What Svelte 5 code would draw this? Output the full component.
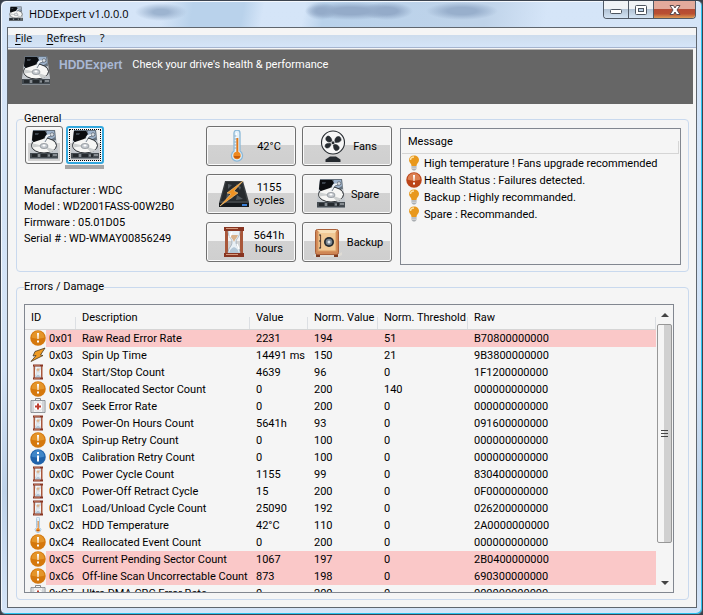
<script lang="ts">
    const drives = ['Drive 1', 'Drive 2'];
    let selected = $state(1);

    const info = [
        'Manufacturer : WDC',
        'Model : WD2001FASS-00W2B0',
        'Firmware : 05.01D05',
        'Serial # : WD-WMAY00856249'
    ];

    const tools = [
        { icon: 'temp', text: '42°C' },
        { icon: 'fan', text: 'Fans' },
        { icon: 'power', text: '1155\ncycles' },
        { icon: 'hdd', text: 'Spare' },
        { icon: 'hours', text: '5641h\nhours' },
        { icon: 'safe', text: 'Backup' }
    ];

    const messages = [
        { icon: 'bulb', text: 'High temperature ! Fans upgrade recommended' },
        { icon: 'fail', text: 'Health Status : Failures detected.' },
        { icon: 'bulb', text: 'Backup : Highly recommanded.' },
        { icon: 'bulb', text: 'Spare : Recommanded.' }
    ];

    const columns = ['ID', 'Description', 'Value', 'Norm. Value', 'Norm. Threshold', 'Raw'];

    // icon, id, description, value, norm. value, norm. threshold, raw, damaged
    const rows: any[] = [
        ['warn', '0x01', 'Raw Read Error Rate', '2231', '194', '51', 'B70800000000', true],
        ['bolt', '0x03', 'Spin Up Time', '14491 ms', '150', '21', '9B3800000000'],
        ['hours', '0x04', 'Start/Stop Count', '4639', '96', '0', '1F1200000000'],
        ['warn', '0x05', 'Reallocated Sector Count', '0', '200', '140', '000000000000'],
        ['aid', '0x07', 'Seek Error Rate', '0', '200', '0', '000000000000'],
        ['hours', '0x09', 'Power-On Hours Count', '5641h', '93', '0', '091600000000'],
        ['warn', '0x0A', 'Spin-up Retry Count', '0', '100', '0', '000000000000'],
        ['info', '0x0B', 'Calibration Retry Count', '0', '100', '0', '000000000000'],
        ['hours', '0x0C', 'Power Cycle Count', '1155', '99', '0', '830400000000'],
        ['hours', '0xC0', 'Power-Off Retract Cycle', '15', '200', '0', '0F0000000000'],
        ['hours', '0xC1', 'Load/Unload Cycle Count', '25090', '192', '0', '026200000000'],
        ['temp', '0xC2', 'HDD Temperature', '42°C', '110', '0', '2A0000000000'],
        ['warn', '0xC4', 'Reallocated Event Count', '0', '200', '0', '000000000000'],
        ['warn', '0xC5', 'Current Pending Sector Count', '1067', '197', '0', '2B0400000000', true],
        ['warn', '0xC6', 'Off-line Scan Uncorrectable Count', '873', '198', '0', '690300000000', true],
        ['aid', '0xC7', 'Ultra DMA CRC Error Rate', '0', '200', '0', '000000000000']
    ];

    let listElem: HTMLElement;

    function scroll(dy: number) {
        listElem.scrollTop += dy;
    }
</script>

{#snippet icon(name: string)}
    <svg viewBox="0 0 32 32" aria-hidden="true">
        {#if name === 'hdd'}
            <path d="M5 1h22l3 22v7H2v-7z" fill="#c3c8cd" />
            <path d="M5 1h22l1 10-6 2H8l-4-1z" fill="#66727e" />
            <path d="M19 2h7l1 6-5 3-5-3z" fill="#9db2cb" />
            <ellipse cx="16" cy="16.500" rx="12.500" ry="7.500" fill="#f6f6f4" stroke="#25292d" />
            <path d="M5 2h12l2 3-4 5-9 3-2-2z" fill="#0b0d10" />
            <path d="M7 4h4l-1 2H7z" fill="#3a424b" />
            <path d="M16 17L5 14.500a13 7 0 0 0-1 4zM16 17l11 4a13 9 0 0 1-5 2.500z" fill="#cdd0d0" />
            <ellipse cx="16" cy="17" rx="4" ry="2.600" fill="#c3c8cd" stroke="#84898f" stroke-width=".7" />
            <ellipse cx="16" cy="16.600" rx="1.600" ry="1" fill="#fff" />
            <path d="M25 5l-6 2-3 6" fill="none" stroke="#eef2f5" stroke-width="2" />
            <path d="M26 6l-6 2-3 5" fill="none" stroke="#5f6b77" stroke-width=".8" />
            <circle cx="24" cy="5.500" r="1.800" fill="#d7dee5" stroke="#4b535c" stroke-width=".6" />
            <path d="M2 24h28v5.500H2z" fill="#454c52" />
            <path d="M4 25h5v3H4zM13 25h6v3h-6zM22 25h2v3h-2z" fill="#252a2e" />
            <path d="M10 25h2v3h-2zM20 25.500h2v2h-2zM25 25h4v2h-4z" fill="#858b90" />
        {:else if name === 'temp'}
            <path d="M13 3a3 3 0 0 1 6 0v18a5.500 5.500 0 1 1-6 0z" fill="#e4f1fa" stroke="#8bb8d8" stroke-width="1.300" />
            <path d="M15 3h1v19h-1z" fill="#fff" />
            <path d="M15.300 8h2v15h-2z" fill="#e17819" />
            <circle cx="16" cy="25.500" r="3.700" fill="#ee8a22" />
            <path d="M12.500 26a3.700 3.700 0 0 0 7 0z" fill="#c85c0a" />
            <path d="M13.500 6h2M13.500 9h2M13.500 12h2M13.500 15h2M13.500 18h2" stroke="#7a98ac" stroke-width=".8" />
        {:else if name === 'fan'}
            <path d="M13 26.500h6l4.500 3V32h-15v-2.500z" fill="#262b30" />
            <circle cx="16" cy="12.500" r="11.500" fill="#f7f7f7" stroke="#262b30" stroke-width="1.100" />
            <path d="M14.500 11c-5-1-4-6-1-6.500 3 0 3 4 2.500 6zM18.500 12c2-4.500 7-3 6.500 0 0 3.500-4 3-6.500 1.500zM17 15c4 2 3.500 6.500 0 6.500-3 0-3-3-1.500-6.500zM13.500 13.500c-2.500 3.500-7 1.500-6-1 1-2.500 4-1.500 6 0z" fill="#262b30" stroke="#262b30" stroke-width=".6" transform="rotate(-25 16 13)" />
            <circle cx="16" cy="12.700" r="1.500" fill="#262b30" />
        {:else if name === 'power'}
            <path d="M7 3h18l6 21v5H1v-4z" fill="#3d4144" />
            <path d="M8 4h16l5 19H3z" fill="#272b2e" />
            <path d="M10 6l4 1-4 4zM18 6l5 3-1 3zM9 15l6 5-7 2zM19 17l6 4-7 1z" fill="#52595e" />
            <path d="M1 25h30v4H1z" fill="#16191c" />
            <path d="M24 26h5v2h-5z" fill="#3b80d8" />
            <path d="M25 3L9 15l4 1L2 28 20 15l-4-2z" fill="#ef9324" stroke="#ffd08a" stroke-width=".6" />
        {:else if name === 'hours'}
            <path d="M7 3h3v26H7zM22 3h3v26h-3z" fill="#a9573a" />
            <path d="M10 4h12c0 8-4 8-4 12 0 5 4 5 4 12H10c0-7 4-7 4-12 0-4-4-4-4-12z" fill="#e9f0f5" stroke="#93a5b4" stroke-width=".7" />
            <path d="M12 9h8c-1 3-3 4-4 7-1-3-3-4-4-7z" fill="#d9b18a" />
            <path d="M11 27c1-4 3-5 5-6 2 1 4 2 5 6z" fill="#b3c6d6" />
            <path d="M14 6l-2 5M19 18l2 5" stroke="#fff" stroke-width="1.500" />
            <path d="M6 1h20v4H6zM6 27h20v4H6z" fill="#883522" />
            <path d="M8 2h12v1H8zM8 28h12v1H8z" fill="#d59a7d" />
        {:else if name === 'safe'}
            <path d="M2 29h24l5-3v3l-4 2H3z" fill="#dedbd5" />
            <path d="M5 27h4v4H5zM23 27h4v4h-4z" fill="#7a3b22" />
            <rect x="4.500" y="3.500" width="23" height="25" rx="2" fill="#cf8654" stroke="#a9603a" />
            <rect x="7" y="6" width="18" height="19" fill="#f1c995" stroke="#dc9c63" />
            <path d="M6 4h20l-2 3H9z" fill="#f8dfb7" />
            <path d="M9.500 9v13" stroke="#6f4a35" stroke-width="1.200" />
            <path d="M8 9h2M8 15h2M8 22h2" stroke="#333" />
            <circle cx="18" cy="16" r="5" fill="#23292f" />
            <circle cx="18" cy="16" r="3.300" fill="#77848f" />
            <circle cx="18" cy="16" r="1.500" fill="#dde4e9" />
        {:else if name === 'bulb'}
            <path d="M16 1c6 0 10 4 10 9 0 5-5 7-5 12H11c0-5-5-7-5-12 0-5 4-9 10-9z" fill="#e8981d" />
            <path d="M9 10c0-4 3-6 7-6" fill="none" stroke="#fce0a0" stroke-width="3" />
            <path d="M11 22h10v6l-3 3h-4l-3-3z" fill="#a9adb1" />
            <path d="M11 24h10M11 27h10" stroke="#e1e3e5" stroke-width="1.300" />
        {:else if name === 'warn' || name === 'fail'}
            <circle cx="16" cy="16" r="15.500" fill={name === 'fail' ? '#bb4419' : '#d5780d'} />
            <path d="M3 15a13 13 0 0 1 26 0c-7 3-19 3-26 0z" fill={name === 'fail' ? '#dc8052' : '#e4952a'} />
            <path d="M14 6h4l-1 12h-2zM14 21h4v4h-4z" fill="#fff" />
        {:else if name === 'info'}
            <circle cx="16" cy="16" r="15.500" fill="#1f62aa" />
            <path d="M3 15a13 13 0 0 1 26 0c-7 3-19 3-26 0z" fill="#3f86c8" />
            <path d="M14 6h4v4h-4zM14 13h4v12h-4z" fill="#fff" />
        {:else if name === 'bolt'}
            <path d="M30 2L10 9 6 18l6-1L2 29l24-12-5-1z" fill="#ef9b24" stroke="#40321c" stroke-width="1.500" />
        {:else if name === 'aid'}
            <path d="M11 5V1h10v4" fill="none" stroke="#888" stroke-width="2" />
            <path d="M2 5h28v24H2z" fill="#f1f2f3" stroke="#8c9196" stroke-width="2" />
            <path d="M6 5v24M26 5v24" stroke="#b2b7bc" stroke-width="2" />
            <circle cx="16" cy="17" r="9" fill="#fff" stroke="#bfc3c7" />
            <path d="M14 11h4v4h4v4h-4v4h-4v-4h-4v-4h4z" fill="#bf3e2f" />
        {/if}
    </svg>
{/snippet}

<div class="window">
    <header class="titlebar">
        <span class="icon16">{@render icon('hdd')}</span>
        <h1>HDDExpert v1.0.0.0</h1>
        <div class="controls">
            <button aria-label="Minimize">
                <svg viewBox="0 0 14 12"><rect x="1.500" y="5.500" width="11" height="4" rx="1" fill="#fff" stroke="#4d5560" /></svg>
            </button>
            <button aria-label="Maximize">
                <svg viewBox="0 0 14 12">
                    <rect x="1.500" y="1.500" width="11" height="9" rx="1" fill="#fff" stroke="#4d5560" />
                    <rect x="4.500" y="4.500" width="5" height="3" fill="#b9cfe6" stroke="#4d5560" />
                </svg>
            </button>
            <button class="close" aria-label="Close">
                <svg viewBox="0 0 14 12">
                    <path d="M2 1.500h3.500L7 4l1.500-2.500H12L9 6l3 4.500H8.500L7 8l-1.500 2.500H2L5 6z" fill="#fff" stroke="#5a4a4c" />
                </svg>
            </button>
        </div>
    </header>

    <div class="client">
        <nav class="menu">
            <button><u>F</u>ile</button>
            <button><u>R</u>efresh</button>
            <button>?</button>
        </nav>

        <div class="banner">
            <span class="icon32">{@render icon('hdd')}</span>
            <strong>HDDExpert</strong>
            <span>Check your drive's health &amp; performance</span>
        </div>

        <main>
            <fieldset>
                <legend>General</legend>
                <div class="general">
                    <div>
                        <div class="drives">
                            {#each drives as name, i}
                                <button
                                    class="drive"
                                    class:selected={selected === i}
                                    aria-label={name}
                                    onclick={() => selected = i}
                                >
                                    <span class="icon32">{@render icon('hdd')}</span>
                                </button>
                            {/each}
                        </div>
                        <div class="info">
                            {#each info as line}
                                <p>{line}</p>
                            {/each}
                        </div>
                    </div>

                    <div class="tools">
                        {#each tools as tool}
                            <button class="tool">
                                <span class="icon32">{@render icon(tool.icon)}</span>
                                <span>{tool.text}</span>
                            </button>
                        {/each}
                    </div>

                    <div class="messages">
                        <h2>Message</h2>
                        <ul>
                            {#each messages as message}
                                <li><span class="icon16">{@render icon(message.icon)}</span>{message.text}</li>
                            {/each}
                        </ul>
                    </div>
                </div>
            </fieldset>

            <fieldset class="errors">
                <legend>Errors / Damage</legend>
                <div class="list">
                    <div class="scroll" bind:this={listElem}>
                        <table>
                            <colgroup>
                                <col class="c-id" />
                                <col class="c-desc" />
                                <col class="c-value" />
                                <col class="c-norm" />
                                <col class="c-threshold" />
                                <col />
                            </colgroup>
                            <thead>
                                <tr>
                                    {#each columns as column}
                                        <th>{column}</th>
                                    {/each}
                                </tr>
                            </thead>
                            <tbody>
                                {#each rows as [ico, id, desc, value, norm, threshold, raw, damaged]}
                                    <tr class:damaged>
                                        <td class="id">
                                            <div><span class="icon16">{@render icon(ico)}</span>{id}</div>
                                        </td>
                                        <td>{desc}</td>
                                        <td>{value}</td>
                                        <td>{norm}</td>
                                        <td>{threshold}</td>
                                        <td>{raw}</td>
                                    </tr>
                                {/each}
                            </tbody>
                        </table>
                    </div>
                    <div class="scrollbar">
                        <button aria-label="Scroll up" onclick={() => scroll(-17)}>
                            <svg viewBox="0 0 8 4"><path d="M0 4l4-4 4 4z" fill="#444" /></svg>
                        </button>
                        <div class="track">
                            <div class="thumb"><i></i><i></i><i></i></div>
                        </div>
                        <button aria-label="Scroll down" onclick={() => scroll(17)}>
                            <svg viewBox="0 0 8 4"><path d="M0 0h8L4 4z" fill="#444" /></svg>
                        </button>
                    </div>
                </div>
            </fieldset>
        </main>
    </div>
</div>

<style>
:global(body) {
    margin: 0;
    background: #3a404a;
}
.window {
    box-sizing: border-box;
    display: flex;
    flex-direction: column;
    height: 100vh;
    padding: 0 5px 6px 6px;
    border: 1px solid #3c4450;
    border-radius: 6px;
    background:
        radial-gradient(ellipse 26px 9px at 160px 11px, #9db4d0 30%, transparent),
        radial-gradient(ellipse 16px 9px at 320px 10px, #94abc9 30%, transparent),
        radial-gradient(ellipse 46px 9px at 350px 10px, #94abc9 40%, transparent),
        radial-gradient(ellipse 26px 9px at 386px 10px, #94abc9 40%, transparent),
        radial-gradient(ellipse 36px 9px at 461px 10px, #98afcc 40%, transparent),
        linear-gradient(100deg, transparent 160px, #b9d2eb 190px, #b9d2eb 240px, transparent 260px, transparent 300px, #b9d2eb 320px, #bfd3e9 480px, transparent 540px) top / 100% 26px no-repeat,
        linear-gradient(#d5e5f8, #d3e3f6 60%, #bfd3ea 80%, #d5e5f8);
    box-shadow: inset 1px 1px #f4f8fd, inset -1px -1px #2bc4f0;
    color: #000;
    font: 11px/13px Roboto, "Liberation Sans", Arial, sans-serif;
}
button {
    margin: 0;
    padding: 0;
    border: 0;
    background: none;
    color: inherit;
    font: inherit;
}
svg {
    display: block;
    width: 100%;
    height: 100%;
}
.icon16 {
    flex: none;
    width: 16px;
    height: 16px;
}
.icon32 {
    flex: none;
    width: 32px;
    height: 32px;
}

.titlebar {
    display: flex;
    flex: none;
    align-items: center;
    height: 26px;
    padding-left: 1px;
}
h1 {
    flex: 1;
    margin: 0 0 0 5px;
    font: 11px/16px "Open Sans", sans-serif;
}
.controls {
    display: flex;
    align-self: flex-start;
    height: 17px;
    margin-right: 1px;
    border: 1px solid #515a66;
    border-top: 0;
    border-radius: 0 0 4px 4px;
    overflow: hidden;
}
.controls button {
    display: grid;
    place-items: center;
    width: 25px;
    border-right: 1px solid #515a66;
    background: linear-gradient(#f0f3f6 50%, #b3c4d6 50%, #d3e3f4);
}
.controls .close {
    width: 41px;
    border: 0;
    background: linear-gradient(#e3aa9b 45%, #b34a35 45%, #b94f32 75%, #dc9a55);
}
.controls svg {
    width: 14px;
    height: 12px;
}

.client {
    display: flex;
    flex: 1;
    flex-direction: column;
    min-height: 0;
    border: 1px solid #5f666e;
    background: #f5f5f5;
}
.menu {
    display: flex;
    flex: none;
    gap: 14px;
    height: 18px;
    padding: 1px 0 0 7px;
    border-bottom: 1px solid #a6b5cf;
    background: linear-gradient(#f5f5f5 38%, #cddced 38%, #d5e5f8);
    font: 11px/18px "Open Sans", sans-serif;
}
.menu u {
    text-underline-offset: 2px;
}
.banner {
    display: flex;
    flex: none;
    box-sizing: border-box;
    height: 55px;
    margin: 1px 3px 0 0;
    padding: 5px 12px;
    border-top: 1px solid #b0b0b0;
    background: #666;
    color: #fff;
    line-height: 20px;
}
.banner strong {
    margin: 0 10px 0 7px;
    color: #a9b8d4;
    font: bold 12px/20px "Liberation Sans", Arial, sans-serif;
}

main {
    display: flex;
    flex: 1;
    flex-direction: column;
    gap: 9px;
    min-height: 0;
    padding: 9px 7px 7px 8px;
}
fieldset {
    min-width: 0;
    margin: 0;
    padding: 1px 7px 6px;
    border: 1px solid #c9d9ee;
    border-radius: 4px;
}
legend {
    padding: 0;
    line-height: 12px;
}
.general {
    display: grid;
    grid-template-columns: 174px 186px 1fr;
    column-gap: 8px;
}
.drives {
    display: flex;
    gap: 3px;
    padding-left: 1px;
}
.drive {
    position: relative;
    display: grid;
    place-items: center;
    width: 38px;
    height: 38px;
    border: 1px solid #707070;
    border-radius: 3px;
    background: linear-gradient(#f3f3f3 45%, #d2d2d2 45%);
    box-shadow: inset 0 0 0 2px #f8f8f8;
}
.drive.selected {
    border: 2px solid #33a8de;
    outline: 1px dotted #000;
    outline-offset: -4px;
}
.drive.selected::after {
    content: "";
    position: absolute;
    top: 37px;
    left: -3px;
    width: 39px;
    height: 4px;
    background: #a5a5a5;
}
.info {
    padding-top: 19px;
    line-height: 16px;
    white-space: nowrap;
}
.info p {
    margin: 0;
}
.tools {
    display: grid;
    grid-template-columns: 1fr 1fr;
    align-content: start;
    gap: 8px 6px;
}
.tool {
    display: flex;
    align-items: center;
    justify-content: center;
    gap: 4px;
    height: 40px;
    border: 1px solid #707070;
    border-radius: 3px;
    background: linear-gradient(#f3f3f3 48%, #d2d2d2 48%, #cfcfcf);
    box-shadow: inset 0 0 0 1px #fafafa;
    white-space: pre-line;
}
.messages {
    box-sizing: border-box;
    min-height: 137px;
    margin-top: 2px;
    border: 1px solid #828790;
}
.messages h2 {
    margin: 0 1px 1px;
    padding: 6px 6px 5px;
    border: solid #d5d5d5;
    border-width: 0 1px 1px 0;
    border-image: linear-gradient(transparent 50%, #d5d5d5 50%) 1;
    font: inherit;
}
.messages ul {
    margin: 0;
    padding: 0 0 0 5px;
    list-style: none;
}
.messages li {
    display: flex;
    gap: 2px;
    height: 17px;
    line-height: 17px;
    white-space: nowrap;
}

.errors {
    display: flex;
    flex: 1;
    min-height: 0;
    padding: 11px 14px 6px 7px;
}
.list {
    display: flex;
    flex: 1;
    min-width: 0;
    border: 1px solid #828790;
}
.scroll {
    flex: 1;
    overflow: auto;
    scrollbar-width: none;
}
table {
    width: 100%;
    border-collapse: separate;
    border-spacing: 0;
    table-layout: fixed;
}
.c-id { width: 51px; }
.c-desc { width: 174px; }
.c-value { width: 58px; }
.c-norm { width: 70px; }
.c-threshold { width: 90px; }
th {
    position: sticky;
    top: 0;
    box-sizing: border-box;
    height: 25px;
    padding: 1px 0 0 6px;
    border-bottom: 1px solid #d5d5d5;
    background: linear-gradient(#dcdfe3, #dcdfe3) right bottom / 1px 12px no-repeat #f5f5f5;
    font-weight: normal;
    text-align: left;
    white-space: nowrap;
}
td {
    height: 17px;
    padding: 0 0 0 6px;
    line-height: 17px;
    white-space: nowrap;
}
.id {
    padding-left: 5px;
}
.id div {
    display: flex;
    gap: 3px;
    height: 17px;
}
.damaged td {
    background: #fac8c8;
}
.damaged .id {
    background: linear-gradient(to right, transparent 21px, #fac8c8 21px);
}
.scrollbar {
    display: flex;
    flex-direction: column;
    width: 15px;
    margin: 0 1px;
}
.scrollbar button {
    display: grid;
    flex: none;
    place-items: center;
    height: 19px;
}
.scrollbar button svg {
    width: 8px;
    height: 4px;
}
.track {
    flex: 1;
}
.thumb {
    box-sizing: border-box;
    display: flex;
    flex-direction: column;
    align-items: center;
    justify-content: center;
    gap: 2px;
    height: 88%;
    border: 1px solid #979797;
    border-radius: 2px;
    background: linear-gradient(to right, #f5f5f5 45%, #d0d0d0 45%);
}
.thumb i {
    width: 7px;
    height: 1px;
    background: #444;
}
</style>
